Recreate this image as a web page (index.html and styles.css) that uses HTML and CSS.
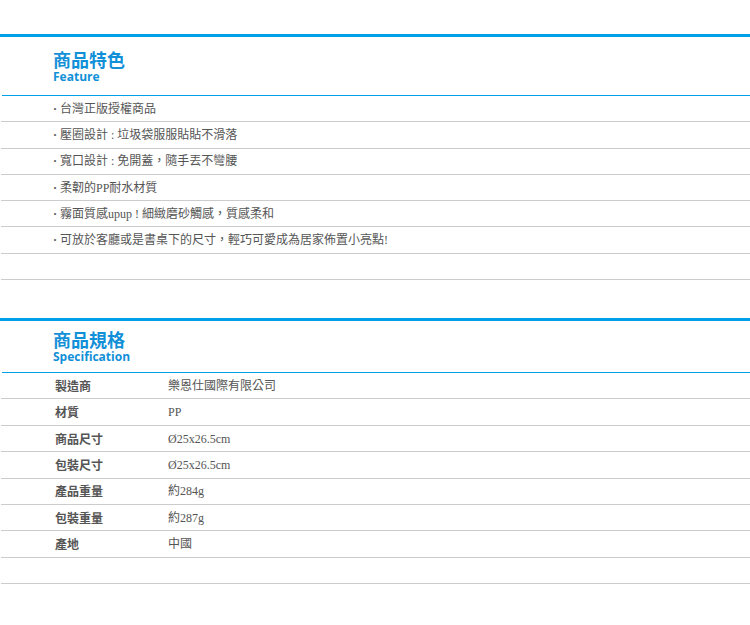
FILE: index.html
```html
<!DOCTYPE html>
<html lang="zh-Hant">
<head>
<meta charset="utf-8">
<title>商品特色</title>
<link rel="stylesheet" href="styles.css">
</head>
<body>
<div class="page">
  <section class="block feature">
    <div class="head">
      <h2 class="title">商品特色</h2>
      <p class="sub">Feature</p>
    </div>
    <ul class="list">
      <li class="row"><span class="dot">·</span>台灣正版授權商品</li>
      <li class="row"><span class="dot">·</span>壓圈設計 : 垃圾袋服服貼貼不滑落</li>
      <li class="row"><span class="dot">·</span>寬口設計 : 免開蓋，隨手丟不彎腰</li>
      <li class="row"><span class="dot">·</span>柔韌的PP耐水材質</li>
      <li class="row"><span class="dot">·</span>霧面質感upup ! 細緻磨砂觸感，質感柔和</li>
      <li class="row"><span class="dot">·</span>可放於客廳或是書桌下的尺寸，輕巧可愛成為居家佈置小亮點!</li>
      <li class="row"></li>
    </ul>
  </section>
  <section class="block spec">
    <div class="head">
      <h2 class="title">商品規格</h2>
      <p class="sub">Specification</p>
    </div>
    <ul class="list">
      <li class="row srow"><span class="label">製造商</span><span class="value">樂恩仕國際有限公司</span></li>
      <li class="row srow"><span class="label">材質</span><span class="value">PP</span></li>
      <li class="row srow"><span class="label">商品尺寸</span><span class="value">Ø25x26.5cm</span></li>
      <li class="row srow"><span class="label">包裝尺寸</span><span class="value">Ø25x26.5cm</span></li>
      <li class="row srow"><span class="label">產品重量</span><span class="value">約284g</span></li>
      <li class="row srow"><span class="label">包裝重量</span><span class="value">約287g</span></li>
      <li class="row srow"><span class="label">產地</span><span class="value">中國</span></li>
      <li class="row srow"></li>
    </ul>
  </section>
</div>
</body>
</html>
```

FILE: styles.css
```css
html, body {
  margin: 0;
  padding: 0;
  background: #fff;
}
.page {
  width: 750px;
  font-family: "Liberation Serif", "Noto Sans CJK TC", serif;
  font-size: 12px;
  color: #555;
}
.block {
  border-top: 3px solid #00a0e9;
}
.feature {
  margin-top: 34px;
}
.spec {
  margin-top: 38px;
}
.head {
  margin-left: 2px;
  padding-left: 51px;
  border-bottom: 1px solid #00a0e9;
}
.feature .head {
  padding-top: 11px;
  padding-bottom: 11px;
}
.spec .head {
  padding-top: 7px;
  padding-bottom: 8px;
}
.title {
  margin: 0;
  font-family: "Noto Sans CJK TC", sans-serif;
  font-weight: 700;
  font-size: 18px;
  line-height: 22px;
  color: #1190d8;
}
.sub {
  margin: 0;
  font-family: "Open Sans", sans-serif;
  font-weight: 700;
  font-size: 12px;
  line-height: 14px;
  color: #1190d8;
}
.list {
  list-style: none;
  margin: 0;
  padding: 0;
}
.row {
  margin-left: 1px;
  height: 25.3px;
  border-bottom: 1px solid #ccc;
  display: flex;
  align-items: center;
  padding-left: 52px;
  line-height: 14px;
}
.srow {
  height: 25.375px;
  padding-left: 54px;
}
.dot {
  display: inline-block;
  width: 7px;
  font-weight: 700;
}
.label {
  width: 113px;
  font-family: "Noto Sans CJK TC", sans-serif;
  font-weight: 700;
}
.value {
  flex: 1;
}
```
